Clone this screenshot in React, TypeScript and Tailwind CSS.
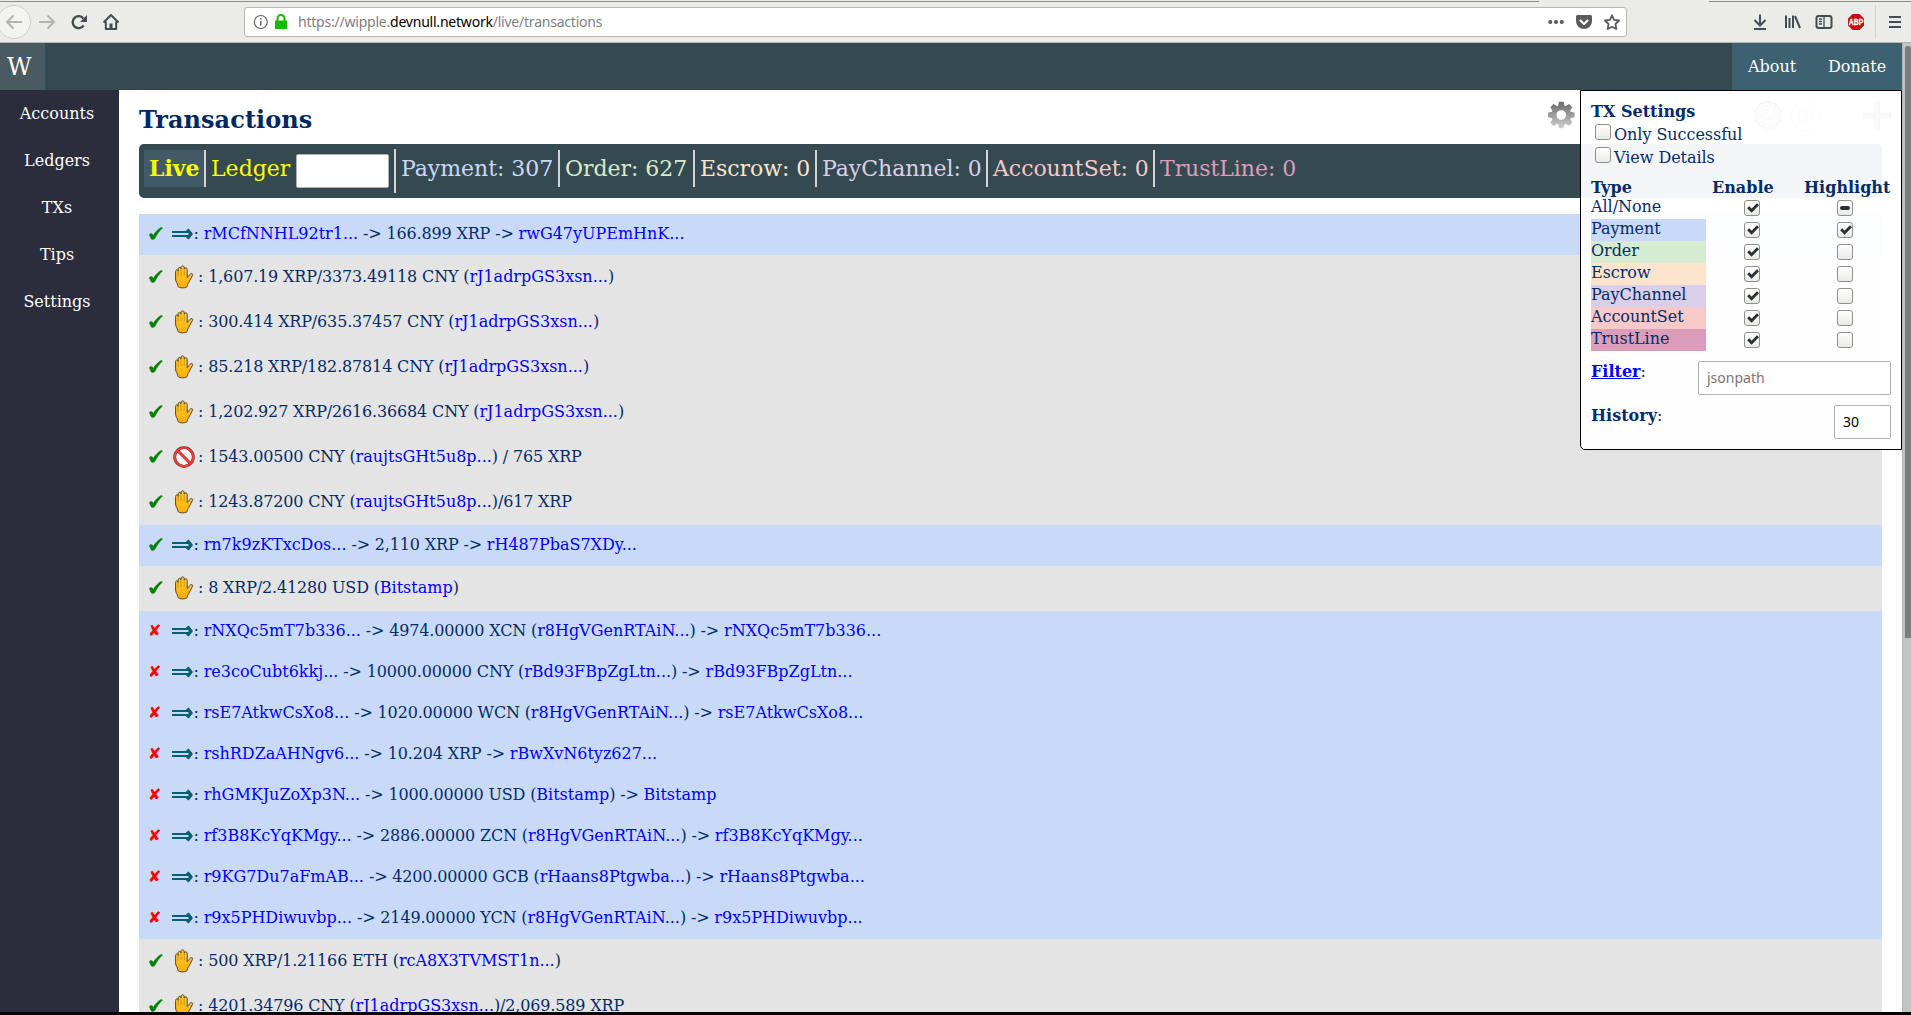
import React from "react";

const SERIF = "font-['DejaVu_Serif',serif]";

type Tx = { ok: boolean; kind: "pay" | "order" | "cancel"; parts: string[] };

// Odd-indexed parts are links
const txs: Tx[] = [
  { ok: true, kind: "pay", parts: ["", "rMCfNNHL92tr1...", " -> 166.899 XRP -> ", "rwG47yUPEmHnK..."] },
  { ok: true, kind: "order", parts: ["1,607.19 XRP/3373.49118 CNY (", "rJ1adrpGS3xsn...", ")"] },
  { ok: true, kind: "order", parts: ["300.414 XRP/635.37457 CNY (", "rJ1adrpGS3xsn...", ")"] },
  { ok: true, kind: "order", parts: ["85.218 XRP/182.87814 CNY (", "rJ1adrpGS3xsn...", ")"] },
  { ok: true, kind: "order", parts: ["1,202.927 XRP/2616.36684 CNY (", "rJ1adrpGS3xsn...", ")"] },
  { ok: true, kind: "cancel", parts: ["1543.00500 CNY (", "raujtsGHt5u8p...", ") / 765 XRP"] },
  { ok: true, kind: "order", parts: ["1243.87200 CNY (", "raujtsGHt5u8p...", ")/617 XRP"] },
  { ok: true, kind: "pay", parts: ["", "rn7k9zKTxcDos...", " -> 2,110 XRP -> ", "rH487PbaS7XDy..."] },
  { ok: true, kind: "order", parts: ["8 XRP/2.41280 USD (", "Bitstamp", ")"] },
  { ok: false, kind: "pay", parts: ["", "rNXQc5mT7b336...", " -> 4974.00000 XCN (", "r8HgVGenRTAiN...", ") -> ", "rNXQc5mT7b336..."] },
  { ok: false, kind: "pay", parts: ["", "re3coCubt6kkj...", " -> 10000.00000 CNY (", "rBd93FBpZgLtn...", ") -> ", "rBd93FBpZgLtn..."] },
  { ok: false, kind: "pay", parts: ["", "rsE7AtkwCsXo8...", " -> 1020.00000 WCN (", "r8HgVGenRTAiN...", ") -> ", "rsE7AtkwCsXo8..."] },
  { ok: false, kind: "pay", parts: ["", "rshRDZaAHNgv6...", " -> 10.204 XRP -> ", "rBwXvN6tyz627..."] },
  { ok: false, kind: "pay", parts: ["", "rhGMKJuZoXp3N...", " -> 1000.00000 USD (", "Bitstamp", ") -> ", "Bitstamp"] },
  { ok: false, kind: "pay", parts: ["", "rf3B8KcYqKMgy...", " -> 2886.00000 ZCN (", "r8HgVGenRTAiN...", ") -> ", "rf3B8KcYqKMgy..."] },
  { ok: false, kind: "pay", parts: ["", "r9KG7Du7aFmAB...", " -> 4200.00000 GCB (", "rHaans8Ptgwba...", ") -> ", "rHaans8Ptgwba..."] },
  { ok: false, kind: "pay", parts: ["", "r9x5PHDiwuvbp...", " -> 2149.00000 YCN (", "r8HgVGenRTAiN...", ") -> ", "r9x5PHDiwuvbp..."] },
  { ok: true, kind: "order", parts: ["500 XRP/1.21166 ETH (", "rcA8X3TVMST1n...", ")"] },
  { ok: true, kind: "order", parts: ["4201.34796 CNY (", "rJ1adrpGS3xsn...", ")/2,069.589 XRP"] },
];

const stats = [
  { label: "Payment: 307", style: "w-[164px] border-r-2 text-[#c9daf8]" },
  { label: "Order: 627", style: "w-[135px] border-r-2 text-[#d5ecd2]" },
  { label: "Escrow: 0", style: "w-[122px] border-r-2 text-[#fde5cd]" },
  { label: "PayChannel: 0", style: "w-[171px] border-r-2 text-[#dacfe8]" },
  { label: "AccountSet: 0", style: "w-[167px] border-r-2 text-[#f9c8c8]" },
  { label: "TrustLine: 0", style: "text-[#dc9dbb]" },
];

const types = [
  { name: "All/None", bg: "", hl: "dash" },
  { name: "Payment", bg: "bg-[#c9daf8]", hl: "check" },
  { name: "Order", bg: "bg-[#d5ecd2]", hl: "" },
  { name: "Escrow", bg: "bg-[#fde5cd]", hl: "" },
  { name: "PayChannel", bg: "bg-[#dacfe8]", hl: "" },
  { name: "AccountSet", bg: "bg-[#f9c8c8]", hl: "" },
  { name: "TrustLine", bg: "bg-[#dc9dbb]", hl: "" },
];

function Arrow() {
  return (
    <svg width="21" height="14" viewBox="0 0 21 14" className="shrink-0">
      <path d="M0 5h16.500M0 9h16.500" stroke="#05606f" strokeWidth="2" />
      <path d="M15.300 2.500 19 7l-3.700 4.500" fill="none" stroke="#05606f" strokeWidth="3.400" strokeLinejoin="round" />
    </svg>
  );
}

function Tick() {
  return (
    <svg width="14" height="13" viewBox="0 0 14 13" className="ml-[1px] shrink-0">
      <path d="M.2 7.600C.9 6.400 2.900 6 3.500 7.100l.7 1.300C6.400 4.900 9.100 2 12.200.3L13.500 1.100C10.500 3.900 7.800 7.600 5.900 11.600c-.5 1-3.300 1.200-3.900.1z" fill="#008000" stroke="#008000" strokeWidth="0.400" />
    </svg>
  );
}

function Hand() {
  return (
    <svg width="20" height="24" viewBox="0 0 20 24" className="shrink-0">
      <defs>
        <linearGradient id="skin" x1="0" y1="0" x2="0" y2="1">
          <stop offset="0" stopColor="#ffcf3d" />
          <stop offset="1" stopColor="#ffad00" />
        </linearGradient>
      </defs>
      <path
        d="M1.600 14V6.400c0-2 2.500-2 2.500 0V4c0-2.200 2.900-2.200 2.900 0V2.600c0-2.300 3.200-2.300 3.200 0V4c.3-1.800 3-1.600 3 .4v8.200c1.400-1.200 2.200-3.200 3.700-3.900 1.200-.5 2.400.6 1.600 1.700-1.600 2.300-2.400 5-3.700 7-1 1.400-1.400 2-1.400 3.400 0 2.600-9.400 2.900-9.600 0C3.700 18 1.600 17.200 1.600 14z"
        fill="url(#skin)"
        stroke="#4f4632"
        strokeWidth="1"
      />
      <path d="M4.100 6v5.500M7 4v7M10.200 4v7" stroke="#c98200" strokeWidth="0.800" />
    </svg>
  );
}

function NoEntry() {
  return (
    <svg width="22" height="22" viewBox="0 0 22 22" className="ml-[1px] shrink-0">
      <circle cx="11" cy="11" r="9.300" fill="#fafafa" stroke="#6d1616" strokeWidth="2.800" />
      <circle cx="11" cy="11" r="9.300" fill="none" stroke="#ec4040" strokeWidth="2" />
      <path d="m4.800 4.800 12.400 12.400" stroke="#8a1a1a" strokeWidth="2.800" />
      <path d="m4.500 4.500 13 13" stroke="#ec4040" strokeWidth="1.900" />
    </svg>
  );
}

function Row({ tx }: { tx: Tx }) {
  const pay = tx.kind === "pay";
  return (
    <div className={`flex shrink-0 items-center pb-[2px] pl-[9px] ${pay ? "h-[41px] bg-[#c9daf8]" : "h-[45px] bg-[#e4e4e4]"}`}>
      <span className="flex w-[24px] font-['DejaVu_Sans',sans-serif] text-[16px] leading-[19px] text-[#ff0000]">
        {tx.ok ? <Tick /> : "✘"}
      </span>
      {pay ? (
        <span className="flex w-[21.5px]"><Arrow /></span>
      ) : (
        <span className="flex w-[26px]">{tx.kind === "cancel" ? <NoEntry /> : <span className="pl-[2px]"><Hand /></span>}</span>
      )}
      <span className="whitespace-pre text-[16px] leading-[19px] tracking-[-0.16px]">
        {": "}
        {tx.parts.map((p, i) => (i % 2 ? <a key={i} className="tracking-[-0.01px] text-[#0000ff]">{p}</a> : <span key={i}>{p}</span>))}
      </span>
    </div>
  );
}

function Check({ mark }: { mark: string }) {
  return (
    <span className="flex size-[16px] items-center justify-center rounded-[3px] border border-[#8f8f8c] bg-gradient-to-b from-white to-[#e9e9e7]">
      {mark === "check" && (
        <svg width="14" height="14" viewBox="0 0 14 14" className="shrink-0">
          <path d="m3.200 6.200 3.400 3.500L13 3.200" fill="none" stroke="#2b3033" strokeWidth="2.900" />
        </svg>
      )}
      {mark === "dash" && <span className="h-[4px] w-[10px] rounded-full bg-[#2b3033]" />}
    </span>
  );
}

function BrowserBar() {
  return (
    <div className="flex h-[43px] shrink-0 flex-col border-b border-[#b4b6b1] bg-[#ebebe9]">
      <div className="flex h-[2px] shrink-0 justify-between pt-[1px]">
        <div className="h-px w-[1539px] bg-[#8b8e88]" />
        <div className="h-px w-[202px] bg-[#8b8e88]" />
      </div>
      <div className="flex h-[40px] items-center">
        <svg width="126" height="40" viewBox="0 2 126 40" className="shrink-0" fill="none">
          <circle cx="14" cy="22" r="16.500" fill="#f3f3f2" stroke="#cfcfcc" />
          <path d="M22 22H7.500M13.500 15.500 7 22l6.500 6.500" stroke="#b3b3b3" strokeWidth="2" />
          <path d="M39 22h14.500M47.500 15.500 54 22l-6.500 6.500" stroke="#b3b3b3" strokeWidth="2" />
          <path d="M83.600 25.500a6 6 0 1 1-.2-7" stroke="#454b4e" strokeWidth="2.400" />
          <path d="M87 15v7h-7z" fill="#454b4e" />
          <path d="m103.500 22.500 7.500-7.500 7.500 7.500M105.800 21.500v7.500h10.400v-7.500" stroke="#454b4e" strokeWidth="2" strokeLinejoin="round" />
          <path d="M109.500 23.500h3V29h-3z" fill="#454b4e" />
        </svg>
        <div className="ml-[118px] flex h-[30px] w-[1383px] items-center rounded-[3px] border border-[#b6b8b3] bg-white">
          <svg width="50" height="28" viewBox="0 0 50 28" fill="none" className="shrink-0">
            <circle cx="15.800" cy="14" r="6.500" stroke="#666" strokeWidth="1.200" />
            <path d="M15.800 13v4.500M15.800 10v1.600" stroke="#666" strokeWidth="1.600" />
            <path d="M30 12.500h12v8.500H30z" fill="#12bc00" />
            <path d="M32.500 13v-2.500a3.500 3.500 0 0 1 7 0V13" stroke="#12bc00" strokeWidth="2" />
          </svg>
          <span className="ml-[3px] pb-[1px] font-['Noto_Sans',sans-serif] text-[14px] tracking-[-0.22px] text-[#7f7f7f]">
            https://wipple.<span className="text-black">devnull.network</span>/live/transactions
          </span>
          <svg width="80" height="28" viewBox="0 0 80 28" className="ml-auto shrink-0" fill="none">
            <g fill="#5a5c5e">
              <circle cx="4.300" cy="14" r="2.100" /><circle cx="10" cy="14" r="2.100" /><circle cx="15.800" cy="14" r="2.100" />
              <path d="M31.500 7h13q1.500 0 1.500 1.500V13a8 8 0 0 1-16 0V8.500Q30 7 31.500 7z" />
            </g>
            <path d="m34 12 4 4 4-4" stroke="#fff" strokeWidth="2.200" />
            <path d="m66 7.300 2.100 4.500 4.900.7-3.500 3.500.8 5.000-4.300-2.300-4.300 2.300.8-5-3.500-3.500 4.900-.7z" stroke="#5a5c5e" strokeWidth="1.800" strokeLinejoin="round" />
          </svg>
        </div>
        <svg width="284" height="40" viewBox="1627 2 284 40" className="shrink-0" fill="none">
          <path d="M1760 14.500v10M1754.500 20l5.500 5.500 5.500-5.500M1754 29h12" stroke="#454b4e" strokeWidth="2" />
          <path d="M1786 15.500V28M1789.500 18v10M1793 15.500V28M1795 16l5 12" stroke="#454b4e" strokeWidth="2" />
          <rect x="1816.500" y="16" width="15" height="12" rx="2" stroke="#454b4e" strokeWidth="2" />
          <path d="M1824 16v12M1819 19h3M1819 21.500h3M1819 24h3" stroke="#454b4e" strokeWidth="1.300" />
          <path d="M1852.500 14h7l4.500 4.500v7l-4.500 4.500h-7l-4.500-4.500v-7z" fill="#c70d10" />
          <text x="1856" y="25.300" fill="#fff" stroke="#fff" strokeWidth="0.300" fontSize="9" fontWeight="700" textAnchor="middle" textLength="14.500" lengthAdjust="spacingAndGlyphs" fontFamily="Liberation Sans">ABP</text>
          <path d="M1875.500 5v34" stroke="#d2d2cf" />
          <path d="M1889 17h12M1889 22h12M1889 27h12" stroke="#454b4e" strokeWidth="2" />
        </svg>
      </div>
    </div>
  );
}

function Gear() {
  return (
    <svg width="28" height="28" viewBox="-13.300 -14 28 28" className="shrink-0">
      <defs>
        <linearGradient id="gear" x1="0" y1="-14" x2="0" y2="14" gradientUnits="userSpaceOnUse">
          <stop offset="0" stopColor="#666" />
          <stop offset="1" stopColor="#d2d2d2" />
        </linearGradient>
      </defs>
      <circle r="7.300" fill="none" stroke="url(#gear)" strokeWidth="5" />
      {[0, 45, 90, 135].map((a) => (
        <path
          key={a}
          fill="url(#gear)"
          d={[-1, 1]
            .map((s) => {
              const r = (a * Math.PI) / 180;
              const pt = (x: number, y: number) => `${x * Math.cos(r) - y * Math.sin(r)} ${x * Math.sin(r) + y * Math.cos(r)}`;
              return `M${pt(-3.4, 8.5 * s)}L${pt(-2.2, 13.3 * s)}L${pt(2.2, 13.3 * s)}L${pt(3.4, 8.5 * s)}z`;
            })
            .join("")}
        />
      ))}
    </svg>
  );
}

function SettingsPanel() {
  return (
    <div className="absolute right-0 top-0 flex h-[360px] w-[322px] flex-col rounded-bl-[5px] border border-black bg-white/95 px-[10px] pt-[11px] text-[16px] leading-[19px]">
      <b className="mb-[1px]">TX Settings</b>
      {["Only Successful", "View Details"].map((t) => (
        <label key={t} className="flex h-[23px] items-start pt-[2px]">
          <span className="ml-[4px] mr-[3px]"><Check mark="" /></span>
          <span className="pt-[1px] tracking-[-0.05px]">{t}</span>
        </label>
      ))}
      <div className="mt-[10px] flex h-[19px] font-bold">
        <span className="w-[115px]">Type</span>
        <span className="w-[92px] pl-[6px]">Enable</span>
        <span className="pl-[6px]">Highlight</span>
      </div>
      {types.map((t) => (
        <div key={t.name} className="flex h-[22px]">
          <span className={`w-[115px] tracking-[-0.05px] ${t.bg}`}>{t.name}</span>
          <span className="pl-[38px] pt-[3px]"><Check mark="check" /></span>
          <span className="pl-[77px] pt-[3px]"><Check mark={t.hl} /></span>
        </div>
      ))}
      <div className="mt-[10px] flex h-[44px] justify-between">
        <span className="pt-[1px]"><b className="text-[#0000ff] underline">Filter</b>:</span>
        <span className="flex h-[34px] w-[193px] items-center rounded-[2px] border border-[#b1b1b1] bg-white pb-[2px] pl-[8px] font-['Noto_Sans',sans-serif] text-[14px] text-[#757575]">jsonpath</span>
      </div>
      <div className="flex justify-between">
        <span className="pt-[1px]"><b>History</b>:</span>
        <span className="flex h-[34px] w-[57px] items-center rounded-[2px] border border-[#b1b1b1] bg-white pb-[2px] pl-[8px] font-['Noto_Sans',sans-serif] text-[14px] text-black">30</span>
      </div>
    </div>
  );
}

export default function App() {
  return (
    <div className={`flex h-[1015px] w-[1911px] flex-col overflow-hidden bg-white text-[#042c68] ${SERIF}`}>
      <BrowserBar />
      <div className="flex h-[969px] shrink-0">
        <div className="flex w-[1902px] flex-col">
          <header className="flex h-[47px] shrink-0 justify-between bg-[#354951] text-white">
            <div className="flex w-[45px] items-center bg-[#4a5a61] pl-[7px] text-[24px] leading-[28px]">W</div>
            <nav className="flex w-[170px] items-center bg-[#3e6172] text-[16px]">
              <span className="ml-[16px] w-[80px]">About</span>
              <span>Donate</span>
            </nav>
          </header>
          <div className="relative flex h-[922px]">
            <aside className="flex w-[119px] shrink-0 flex-col items-center bg-[#2b2d3c] pr-[5px] text-[16px] text-white">
              {["Accounts", "Ledgers", "TXs", "Tips", "Settings"].map((t) => (
                <span key={t} className="h-[47px] leading-[47px]">{t}</span>
              ))}
            </aside>
            <main className="flex w-[1783px] flex-col overflow-hidden px-[20px]">
              <div className="-mr-[10px] flex h-[54px] shrink-0 justify-between">
                <h1 className="pt-[16px] text-[24px] font-bold leading-[28px] tracking-[0.07px] text-[#00285f]">Transactions</h1>
                <div className="mt-[11px] flex items-start">
                  <Gear />
                  <svg width="316" height="31" viewBox="1576 0 316 31" fill="none" className="shrink-0">
                    <circle cx="1768" cy="14" r="13.300" fill="#c4c4c4" stroke="#666" strokeWidth="1.500" />
                    <text x="1768" y="22.500" fontSize="24" fontWeight="700" textAnchor="middle" fill="#fff" stroke="#777" strokeWidth="0.800" fontFamily="DejaVu Sans">?</text>
                    <circle cx="1806" cy="15" r="15" stroke="#aaa" />
                    <path d="M1799.500 8h4v13h-4zM1807.500 8h4v13h-4z" stroke="#aaa" />
                    <path d="M1863 14.500h28M1877 .5v28" stroke="#555" strokeWidth="6" />
                    <path d="M1864 14.500h26M1877 1.500v26" stroke="#999" strokeWidth="4" />
                  </svg>
                </div>
              </div>
              <div className="flex h-[54px] shrink-0 items-start rounded-[5px] bg-[#354951] pl-[5px] pt-[6px] text-[22px] leading-[37px]">
                <b className="h-[37px] w-[62px] border-r-2 border-[#d3d3d3] bg-[#425a68] pl-[5px] text-[#ffff00]">Live</b>
                <div className="-mt-px flex h-[44px] w-[190px] border-r-2 border-[#d3d3d3] pl-[5px] pt-px text-[#ffff00]">
                  <span className="w-[85px]">Ledger</span>
                  <span className="mt-[4px] h-[34px] w-[93px] rounded-[2px] border border-[#b1b1b1] bg-white" />
                </div>
                {stats.map((s) => (
                  <span key={s.label} className={`h-[37px] whitespace-nowrap border-r-[#d3d3d3] pl-[5px] tracking-[-0.04px] ${s.style}`}>{s.label}</span>
                ))}
              </div>
              <div className="mt-[16px] flex flex-col">
                {txs.map((t, i) => <Row key={i} tx={t} />)}
              </div>
            </main>
            <SettingsPanel />
          </div>
        </div>
        <div className="w-[9px] border-l border-[#b2b5b3] bg-[#c3c5c4] pl-[2px] pt-[3px]">
          <div className="h-[592px] w-[6px] rounded-t-[4px] bg-[#7a7e7f]" />
        </div>
      </div>
      <div className="h-[3px] bg-black" />
    </div>
  );
}
